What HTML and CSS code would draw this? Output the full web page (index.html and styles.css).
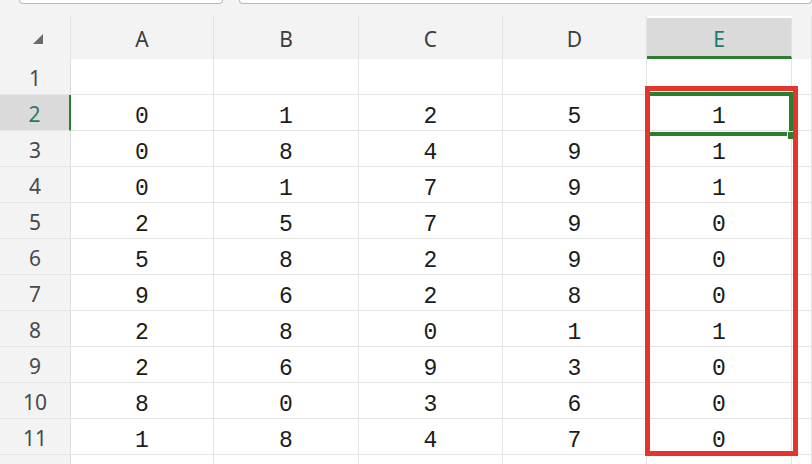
FILE: index.html
```html
<!DOCTYPE html>
<html lang="en">
<head>
    <meta charset="UTF-8">
    <meta name="viewport" content="width=device-width, initial-scale=1.0">
    <title>Sheet1</title>
    <link rel="stylesheet" href="styles.css">
</head>
<body>
    <div class="page">
        <!-- Toolbar edge -->
        <div class="toolbar">
            <div class="tool tool-left"></div>
            <div class="tool tool-right"></div>
        </div>

        <!-- Grid -->
        <div class="sheet">
            <div class="corner">
                <svg width="10" height="10" viewBox="0 0 10 10"><polygon points="10,0 10,10 0,10" fill="#6b6b6b"/></svg>
            </div>
            <div class="col-head">A</div>
            <div class="col-head">B</div>
            <div class="col-head">C</div>
            <div class="col-head">D</div>
            <div class="col-head active">E</div>
            <div class="col-head"></div>

            <div class="row-head">1</div>
            <div class="cell"></div><div class="cell"></div><div class="cell"></div><div class="cell"></div><div class="cell"></div><div class="cell"></div>

            <div class="row-head active">2</div>
            <div class="cell">0</div><div class="cell">1</div><div class="cell">2</div><div class="cell">5</div><div class="cell">1</div><div class="cell"></div>

            <div class="row-head">3</div>
            <div class="cell">0</div><div class="cell">8</div><div class="cell">4</div><div class="cell">9</div><div class="cell">1</div><div class="cell"></div>

            <div class="row-head">4</div>
            <div class="cell">0</div><div class="cell">1</div><div class="cell">7</div><div class="cell">9</div><div class="cell">1</div><div class="cell"></div>

            <div class="row-head">5</div>
            <div class="cell">2</div><div class="cell">5</div><div class="cell">7</div><div class="cell">9</div><div class="cell">0</div><div class="cell"></div>

            <div class="row-head">6</div>
            <div class="cell">5</div><div class="cell">8</div><div class="cell">2</div><div class="cell">9</div><div class="cell">0</div><div class="cell"></div>

            <div class="row-head">7</div>
            <div class="cell">9</div><div class="cell">6</div><div class="cell">2</div><div class="cell">8</div><div class="cell">0</div><div class="cell"></div>

            <div class="row-head">8</div>
            <div class="cell">2</div><div class="cell">8</div><div class="cell">0</div><div class="cell">1</div><div class="cell">1</div><div class="cell"></div>

            <div class="row-head">9</div>
            <div class="cell">2</div><div class="cell">6</div><div class="cell">9</div><div class="cell">3</div><div class="cell">0</div><div class="cell"></div>

            <div class="row-head">10</div>
            <div class="cell">8</div><div class="cell">0</div><div class="cell">3</div><div class="cell">6</div><div class="cell">0</div><div class="cell"></div>

            <div class="row-head">11</div>
            <div class="cell">1</div><div class="cell">8</div><div class="cell">4</div><div class="cell">7</div><div class="cell">0</div><div class="cell"></div>

            <div class="row-head"></div>
            <div class="cell"></div><div class="cell"></div><div class="cell"></div><div class="cell"></div><div class="cell"></div><div class="cell"></div>
        </div>

        <!-- Overlays: active cell and highlight box -->
        <div class="selection"><span class="fill-handle"></span></div>
        <div class="highlight"></div>
    </div>
</body>
</html>
```

FILE: styles.css
```css
/* General */
body {
    margin: 0;
    background-color: #ffffff;
    font-family: 'Noto Sans', 'Open Sans', sans-serif;
    overflow: hidden;
}

.page {
    position: relative;
    width: 812px;
    height: 464px;
    overflow: hidden;
}

/* Toolbar edge at the top */
.toolbar {
    display: flex;
    gap: 16px;
    height: 16px;
    background-color: #f3f3f3;
}

.tool {
    height: 3px;
    background-color: #ffffff;
    border: 1px solid #b9b9b9;
    border-top: none;
    border-radius: 0 0 6px 6px;
}

.tool-left {
    margin-left: 19px;
    width: 202px;
}

.tool-right {
    flex: 1;
}

/* Sheet grid */
.sheet {
    display: grid;
    grid-template-columns: 71px 143px 145px 144px 144px 145px 1fr;
    grid-template-rows: 43px;
    grid-auto-rows: 36px;
}

.corner,
.col-head,
.row-head {
    display: flex;
    justify-content: center;
    align-items: center;
    box-sizing: border-box;
    background-color: #f3f3f3;
    color: #3d3d3d;
    font-size: 21px;
}

.corner {
    padding: 3px 0 0 6px;
    border-right: 1px solid #e2e2e2;
}

.col-head {
    border-right: 1px solid #e2e2e2;
    padding-top: 3px;
}

.col-head.active {
    background-color: #dadada;
    color: #1f7a69;
    border-bottom: 3px solid #2b7d2f;
    margin-top: 2px;
    padding-top: 4px;
}

.row-head {
    border-right: 1px solid #dcdcdc;
    border-bottom: 1px solid #e6e6e6;
    color: #4a4a4a;
    padding-top: 2px;
}

.row-head.active {
    background-color: #dadada;
    color: #1f7a69;
    border-right: 2px solid #2b7d2f;
}

.cell {
    display: flex;
    justify-content: center;
    align-items: center;
    box-sizing: border-box;
    padding-top: 8px;
    border-right: 1px solid #e4e4e4;
    border-bottom: 1px solid #e4e4e4;
    font-family: 'Liberation Mono', 'DejaVu Sans Mono', monospace;
    font-size: 23px;
    color: #1c1c1c;
}

/* Active cell E2 */
.selection {
    position: absolute;
    left: 649px;
    top: 92px;
    width: 140px;
    height: 36px;
    border: 4px solid #2b7d2f;
    border-left: none;
}

.fill-handle {
    position: absolute;
    right: -6px;
    bottom: -7px;
    width: 7px;
    height: 7px;
    background-color: #2b7d2f;
    border-top: 1px solid #ffffff;
    border-left: 1px solid #ffffff;
}

/* Red marker box around column E */
.highlight {
    position: absolute;
    left: 645px;
    top: 86px;
    width: 143px;
    height: 360px;
    border: 5px solid #e4352d;
}
```
